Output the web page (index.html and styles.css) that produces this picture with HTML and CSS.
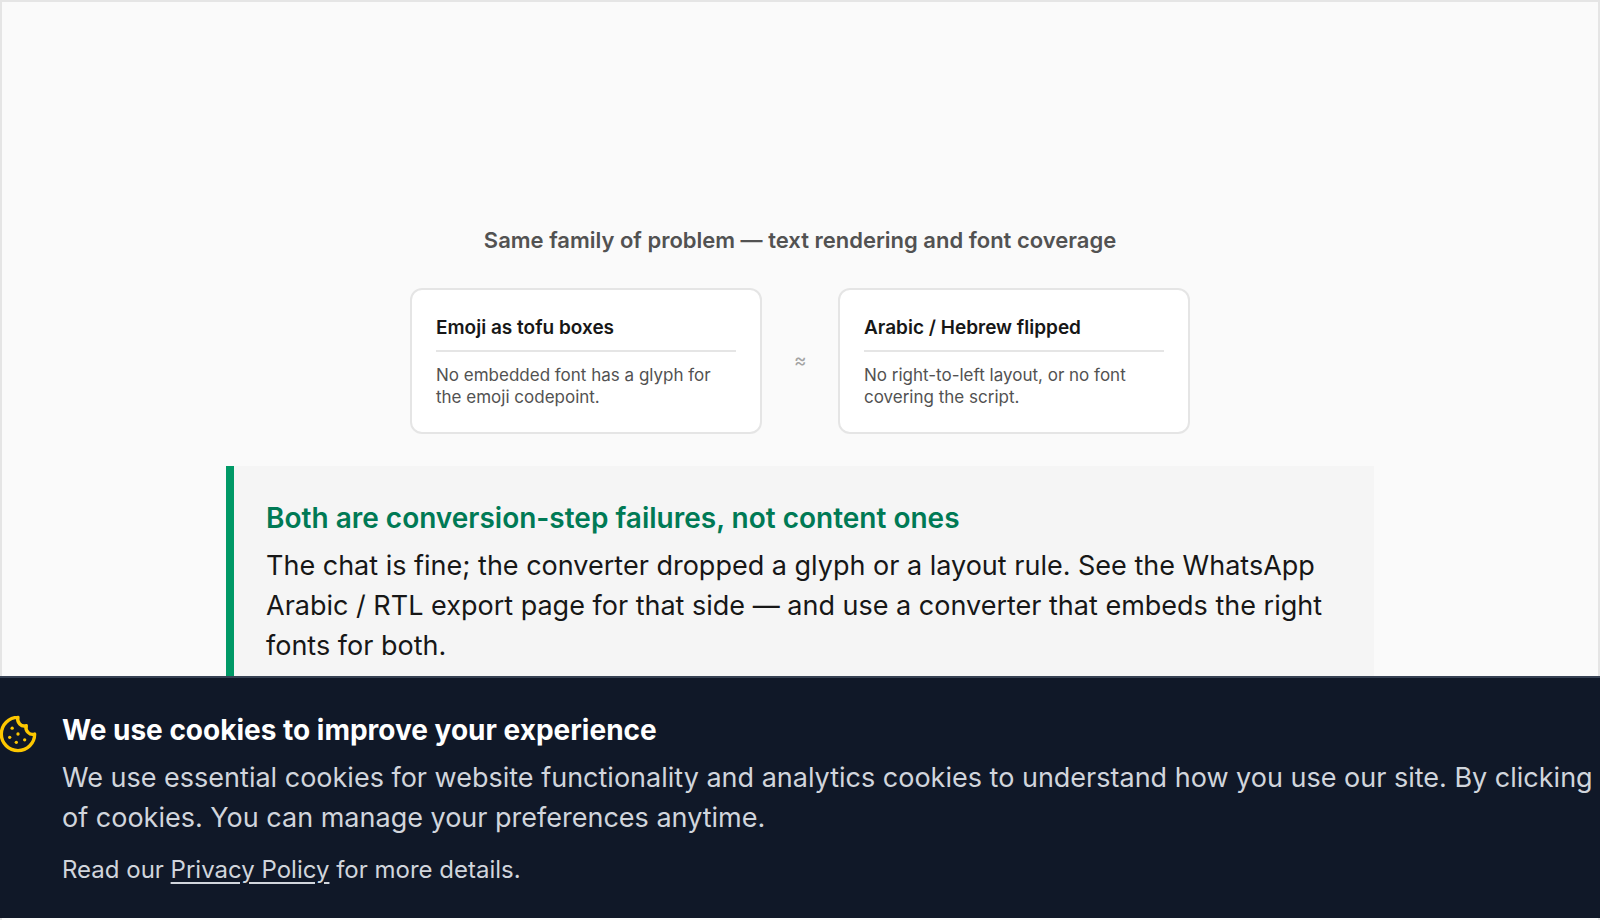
FILE: index.html
```html
<!DOCTYPE html>
<html lang="en">
<head>
    <meta charset="UTF-8">
    <meta name="viewport" content="width=device-width, initial-scale=1.0">
    <title>Text rendering and font coverage</title>
    <link rel="stylesheet" href="styles.css">
</head>
<body>
    <main class="page">
        <section class="compare">
            <h2 class="compare-title">Same family of problem — text rendering and font coverage</h2>
            <div class="compare-row">
                <article class="card">
                    <h3>Emoji as tofu boxes</h3>
                    <p>No embedded font has a glyph for the emoji codepoint.</p>
                </article>
                <span class="approx">≈</span>
                <article class="card">
                    <h3>Arabic / Hebrew flipped</h3>
                    <p>No right-to-left layout, or no font covering the script.</p>
                </article>
            </div>
        </section>

        <aside class="callout">
            <h2>Both are conversion-step failures, not content ones</h2>
            <p>The chat is fine; the converter dropped a glyph or a layout rule. See the WhatsApp Arabic / RTL export page for that side — and use a converter that embeds the right fonts for both.</p>
        </aside>
    </main>

    <section class="cookie-banner" aria-label="Cookies">
        <svg class="cookie-icon" viewBox="0 0 24 24" fill="none" stroke="currentColor" stroke-width="2" stroke-linecap="round" stroke-linejoin="round" aria-hidden="true">
            <path d="M12 2a10 10 0 1 0 10 10 4 4 0 0 1-5-5 4 4 0 0 1-5-5"/>
            <path d="M8.5 8.5v.01"/>
            <path d="M16 15.5v.01"/>
            <path d="M12 12v.01"/>
            <path d="M11 17v.01"/>
            <path d="M7 14v.01"/>
        </svg>
        <div class="cookie-text">
            <h2>We use cookies to improve your experience</h2>
            <p>We use essential cookies for website functionality and analytics cookies to understand how you use our site. By clicking<br>of cookies. You can manage your preferences anytime.</p>
            <p class="cookie-more">Read our <a href="#">Privacy Policy</a> for more details.</p>
        </div>
    </section>
</body>
</html>
```

FILE: styles.css
```css
* {
    box-sizing: border-box;
}

body {
    margin: 0;
    font-family: Inter, "Liberation Sans", sans-serif;
    font-optical-sizing: none;
    font-size: 27px;
    line-height: 40px;
    color: #171717;
    background-color: #fafafa;
    overflow: hidden;
}

h2, h3, p {
    margin: 0;
}

.page {
    display: flex;
    flex-direction: column;
    align-items: center;
    gap: 32px;
    min-height: 100vh;
    padding: 222px 32px 32px;
    border: 2px solid #e5e5e5;
    border-bottom: none;
}

.compare {
    display: flex;
    flex-direction: column;
    gap: 32px;
}

.compare-title {
    font-size: 22px;
    line-height: 32px;
    font-weight: 600;
    color: #525252;
    text-align: center;
}

.compare-row {
    display: flex;
    align-items: center;
    justify-content: center;
    gap: 32px;
}

.card {
    width: 352px;
    padding: 24px;
    border: 2px solid #e5e5e5;
    border-radius: 12px;
    background-color: #ffffff;
}

.card h3 {
    padding-bottom: 8px;
    border-bottom: 2px solid #e5e5e5;
    font-size: 19px;
    line-height: 28px;
    font-weight: 600;
}

.card p {
    padding-top: 12px;
    font-size: 17px;
    line-height: 22px;
    color: #525252;
}

.approx {
    width: 12px;
    font-size: 19px;
    color: #a3a3a3;
    text-align: center;
}

.callout {
    width: 100%;
    max-width: 1148px;
    padding: 32px;
    border-left: 8px solid #009966;
    background-color: #f5f5f5;
}

.callout h2 {
    margin-bottom: 8px;
    font-size: 28px;
    font-weight: 600;
    color: #007a55;
}

.cookie-banner {
    position: fixed;
    left: 0;
    right: 0;
    bottom: 2px;
    display: flex;
    gap: 24px;
    padding: 32px 0;
    border-top: 2px solid #364153;
    background-color: #101828;
    color: #d1d5dc;
    white-space: nowrap;
}

.cookie-icon {
    flex: none;
    width: 40px;
    height: 40px;
    margin: 4px 0 0 -2px;
    color: #fdc700;
}

.cookie-text h2 {
    margin-bottom: 8px;
    font-size: 28px;
    font-weight: 700;
    color: #ffffff;
}

.cookie-text .cookie-more {
    margin-top: 16px;
    font-size: 24px;
    line-height: 32px;
}

.cookie-more a {
    color: inherit;
    text-underline-offset: 4px;
}
```
